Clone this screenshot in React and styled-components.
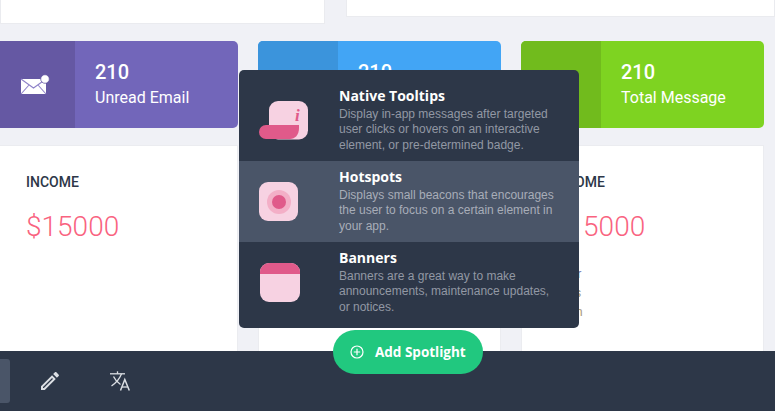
import React from "react";
import styled, { createGlobalStyle } from "styled-components";

const Global = createGlobalStyle`
  html, body { margin: 0; padding: 0; height: 100%; overflow: hidden; background: #f0f1f6; }
  #root { height: 100%; }
  * { box-sizing: border-box; }
`;

const Page = styled.div`
  position: relative;
  width: 775px;
  height: 411px;
  overflow: hidden;
  display: flex;
  flex-direction: column;
  font-family: Roboto, sans-serif;
`;

const Content = styled.div`
  flex: 1;
  min-height: 0;
  overflow: hidden;
  display: flex;
  flex-direction: column;
`;

const TopRow = styled.div`
  height: 41px;
  display: flex;
  gap: 21px;
  flex: none;
`;

const TopCard = styled.div`
  background: #fff;
  border: 1px solid #eaebef;
  border-top: 0;
  height: ${(p) => p.$h}px;
  width: ${(p) => p.$w}px;
`;

const Grid = styled.div`
  display: grid;
  grid-template-columns: repeat(3, 243px);
  column-gap: 20px;
  margin-left: -5px;
`;

const Stat = styled.div`
  height: 87px;
  display: flex;
  border-radius: 5px;
  overflow: hidden;
  background: ${(p) => p.$bg};
  color: #fff;
`;

const StatIcon = styled.div`
  width: 80px;
  flex: none;
  background: ${(p) => p.$bg};
  display: flex;
  align-items: center;
  justify-content: center;
`;

const StatText = styled.div`
  padding: 20px 0 0 20px;
`;

const StatNum = styled.div`
  font-size: 20px;
  font-weight: 500;
  line-height: 23px;
`;

const StatLabel = styled.div`
  font-size: 16px;
  line-height: 20px;
  margin-top: 4px;
`;

const Panels = styled(Grid)`
  margin-top: 17px;
`;

const Panel = styled.div`
  height: 206px;
  background: #fff;
  border: 1px solid #ebecf0;
  border-bottom: 0;
  padding: 27px 30px;
`;

const PanelTitle = styled.div`
  font-size: 14px;
  font-weight: 500;
  line-height: 18px;
  color: #2d3748;
`;

const Amount = styled.div`
  margin-top: 20px;
  font-size: 28px;
  font-weight: 300;
  line-height: 32px;
  color: #f9637f;
`;

const Legend = styled.div`
  margin-top: 24px;
  display: flex;
  flex-direction: column;
  gap: 5px;
`;

const LegendItem = styled.div`
  font-size: 12px;
  line-height: 14px;
  color: ${(p) => p.$c};
`;

const Bar = styled.div`
  height: 60px;
  flex: none;
  background: #2d3748;
  display: flex;
  align-items: center;
`;

const BarTab = styled.div`
  width: 10px;
  height: 44px;
  background: #4a5568;
  border-radius: 0 3px 3px 0;
  flex: none;
`;

const BarButton = styled.div`
  display: flex;
  align-items: center;
  color: #dcdfe4;
  margin-left: ${(p) => p.$ml}px;
`;

const Menu = styled.div`
  position: absolute;
  left: 239px;
  top: 70px;
  width: 340px;
  height: 258px;
  background: #2d3748;
  border-radius: 5px;
  overflow: hidden;
`;

const Item = styled.div`
  height: ${(p) => p.$h}px;
  background: ${(p) => (p.$active ? "#4a5568" : "transparent")};
  display: flex;
  padding-top: ${(p) => p.$pt}px;
`;

const ItemIcon = styled.div`
  width: 100px;
  flex: none;
  padding-left: ${(p) => p.$pl}px;
  padding-top: ${(p) => p.$pt}px;
`;

const ItemTitle = styled.div`
  font-family: "Open Sans", sans-serif;
  font-size: 14px;
  font-weight: 700;
  line-height: 17px;
  color: #fff;
`;

const ItemDesc = styled.div`
  font-family: "Liberation Sans", Arial, sans-serif;
  font-size: 12px;
  line-height: 15.300px;
  margin-top: 3px;
  width: 222px;
  color: ${(p) => (p.$active ? "#a8adb8" : "#9298a4")};
`;

const Spotlight = styled.button`
  position: absolute;
  left: 333px;
  top: 330px;
  width: 150px;
  height: 44px;
  border: 0;
  border-radius: 22px;
  background: #21c87f;
  color: #fff;
  font-family: "Open Sans", sans-serif;
  font-size: 13.500px;
  font-weight: 700;
  display: flex;
  align-items: center;
  padding: 0 0 0 17px;
  gap: 11px;
`;

const MailIcon = () => (
  <svg width="30" height="22" viewBox="0 0 30 22">
    <path d="M1 5h25v15H1z" fill="#fff" />
    <path d="M1 5l12.500 9 12.500-9M1 20l8-9M26 20l-8-9" fill="none" stroke="#8f83c9" strokeWidth="1.1" />
    <circle cx="25" cy="5" r="4.300" fill="#fff" stroke="#6558a3" strokeWidth="0.8" />
  </svg>
);

const TooltipIcon = () => (
  <svg width="50" height="40" viewBox="0 0 50 40">
    <rect x="10" y="1" width="39" height="38.500" rx="9" fill="#f7d2e2" />
    <path d="M7 25h33v3c0 7-4 11-9 11H7a7 7 0 0 1 0-14z" fill="#e05a8a" />
    <text x="36" y="21" fontFamily="Liberation Serif, serif" fontStyle="italic" fontWeight="700" fontSize="17" fill="#e05a8a">i</text>
  </svg>
);

const HotspotIcon = () => (
  <svg width="40" height="40" viewBox="0 0 40 40">
    <rect x="0" y="0" width="39" height="39" rx="9" fill="#f7d2e2" />
    <circle cx="20" cy="20" r="12" fill="#f3afc7" />
    <circle cx="20" cy="20" r="7" fill="#e05a8a" />
  </svg>
);

const BannerIcon = () => (
  <svg width="40" height="40" viewBox="0 0 40 40">
    <rect x="0" y="0" width="40" height="39" rx="9" fill="#f7d2e2" />
    <path d="M0 11V9a9 9 0 0 1 9-9h22a9 9 0 0 1 9 9v2z" fill="#e05a8a" />
  </svg>
);

const PencilIcon = () => (
  <svg width="24" height="24" viewBox="0 0 24 24" fill="currentColor">
    <path d="M14.060 9.020l.92.92L5.920 19H5v-.92l9.060-9.060M17.660 3c-.25 0-.51.1-.7.29l-1.830 1.830 3.750 3.750 1.830-1.830c.39-.39.39-1.020 0-1.410l-2.340-2.340c-.2-.2-.45-.29-.71-.29zm-3.600 3.190L3 17.250V21h3.750L17.810 9.940l-3.750-3.750z" />
  </svg>
);

const TranslateIcon = () => (
  <svg width="20" height="20" viewBox="0 0 20 20" fill="none" stroke="currentColor" strokeWidth="1.300">
    <path d="M0 2.800H15" />
    <path d="M7.500 0.300V2.800" />
    <path d="M11.500 2.800C10 7 6.500 11.500 1.500 15" />
    <path d="M3.500 5.500C5 8.800 7.500 11.500 10.500 13.500" />
    <path d="M10.500 19.500L14.800 8.500L19.300 19.500" strokeWidth="1.500" />
    <path d="M12 16H17.800" />
  </svg>
);

const PlusIcon = () => (
  <svg width="14" height="14" viewBox="0 0 14 14" fill="none" stroke="#fff" strokeWidth="1.200">
    <circle cx="7" cy="7" r="6" />
    <path d="M7 3.800v6.400M3.800 7h6.400" />
  </svg>
);

const stats = [
  { bg: "#7266ba", dark: "#6558a3", label: "Unread Email", icon: <MailIcon /> },
  { bg: "#42a5f5", dark: "#3b94dc" },
  { bg: "#7ed321", dark: "#71bb1d", label: "Total Message" },
];

const items = [
  { title: "Native Tooltips", desc: "Display in-app messages after targeted user clicks or hovers on an interactive element, or pre-determined badge.", icon: <TooltipIcon />, h: 91, pt: 17, ipt: 13, ipl: 20 },
  { title: "Hotspots", desc: "Displays small beacons that encourages the user to focus on a certain element in your app.", icon: <HotspotIcon />, h: 81, pt: 7, ipt: 14, ipl: 20, active: true },
  { title: "Banners", desc: "Banners are a great way to make announcements, maintenance updates, or notices.", icon: <BannerIcon />, h: 86, pt: 7, ipt: 14, ipl: 21 },
];

export default function App() {
  return (
    <Page>
      <Global />
      <Content>
        <TopRow>
          <TopCard $w={326} $h={24} />
          <TopCard $w={430} $h={17} />
        </TopRow>
        <Grid>
          {stats.map((s) => (
            <Stat key={s.bg} $bg={s.bg}>
              <StatIcon $bg={s.dark}>{s.icon}</StatIcon>
              <StatText>
                <StatNum>210</StatNum>
                {s.label && <StatLabel>{s.label}</StatLabel>}
              </StatText>
            </Stat>
          ))}
        </Grid>
        <Panels>
          <Panel>
            <PanelTitle>INCOME</PanelTitle>
            <Amount>$15000</Amount>
          </Panel>
          <Panel />
          <Panel>
            <PanelTitle>INCOME</PanelTitle>
            <Amount>$15000</Amount>
            <Legend>
              <LegendItem $c="#7a80b8">Order</LegendItem>
              <LegendItem $c="#9a9a80">Sales</LegendItem>
              <LegendItem $c="#a89a78">Again</LegendItem>
            </Legend>
          </Panel>
        </Panels>
      </Content>
      <Bar>
        <BarTab />
        <BarButton $ml={28}><PencilIcon /></BarButton>
        <BarButton $ml={48}><TranslateIcon /></BarButton>
      </Bar>
      <Menu>
        {items.map((it) => (
          <Item key={it.title} $h={it.h} $pt={it.pt} $active={it.active}>
            <ItemIcon $pt={it.ipt} $pl={it.ipl}>{it.icon}</ItemIcon>
            <div>
              <ItemTitle>{it.title}</ItemTitle>
              <ItemDesc $active={it.active}>{it.desc}</ItemDesc>
            </div>
          </Item>
        ))}
      </Menu>
      <Spotlight><PlusIcon />Add Spotlight</Spotlight>
    </Page>
  );
}
